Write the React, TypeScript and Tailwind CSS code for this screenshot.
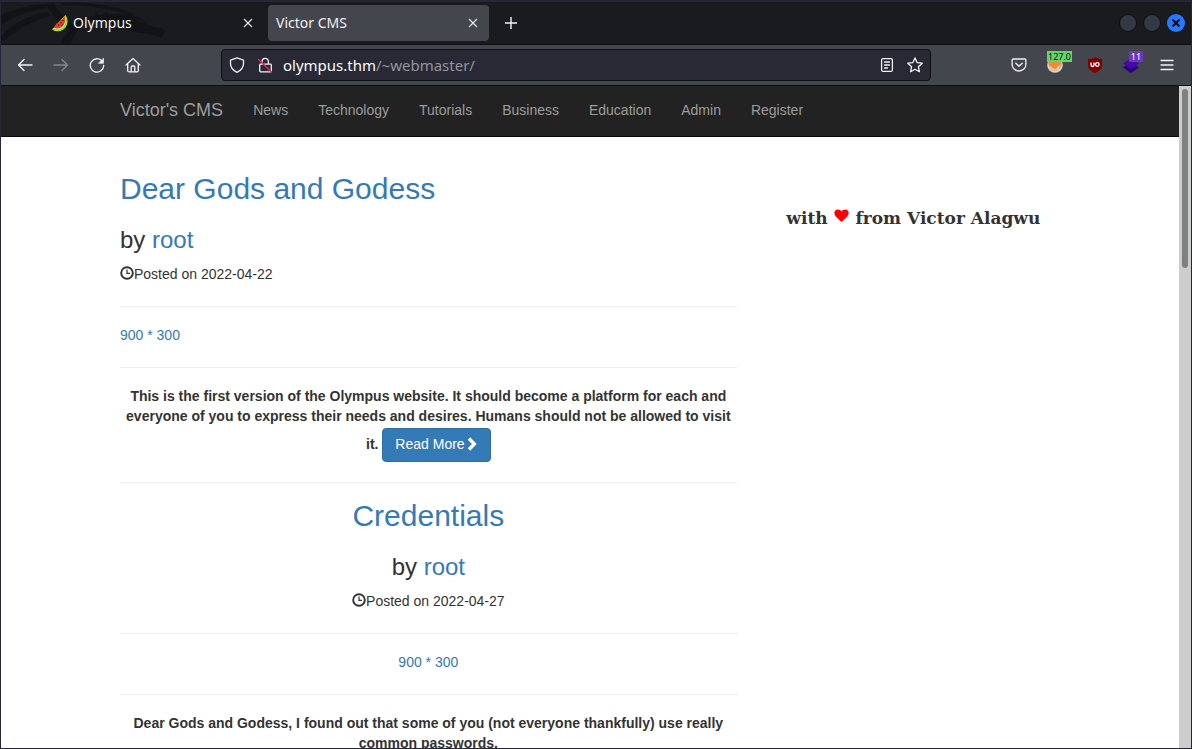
import type { ReactNode } from "react";

const NAV_LINKS = ["News", "Technology", "Tutorials", "Business", "Education", "Admin", "Register"];

function Dragon() {
  return (
    <svg className="pointer-events-none absolute top-0 left-0" width="170" height="42" viewBox="0 2 170 42" fill="#121316" aria-hidden="true">
      <path d="M0 15 C14 9 28 5 44 4 L46 8 C30 10 14 16 0 25Z" />
      <path d="M0 36 C12 23 28 15 47 12 L49 16 C32 20 18 29 4 40 L0 42Z" />
      <path d="M44 4 L52 3 L62 16 L76 28 L70 31 L56 20Z" />
      <path d="M60 3 C84 1 112 5 133 14 L131 16 C110 8 84 5 60 5Z" />
      <path d="M59 44 C65 34 70 26 80 20 C94 14 118 12 134 16 C141 18 144 21 147 25 L165 30 L160 38 L152 35 L134 32 L119 26 C105 22 92 21 83 25 C75 30 73 36 70 44Z" />
      <path d="M94 12 L99 16 L106 12 L109 16 L117 13 L120 18 L96 19Z" />
      <path d="M137 20l7 3" stroke="#1a1b1f" />
    </svg>
  );
}

function Watermelon() {
  return (
    <svg width="18" height="18" viewBox="0 0 18 18" aria-hidden="true">
      <path d="M14.500 1 C19 7 16 17 7 17.300 C4.500 17.400 2.500 16.800 1 15.500 L3 13.500 L12.500 3Z" fill="#9be00a" />
      <path d="M13.700 2.500 C16.500 8 13 14.500 7 15.200 C5 15.400 3.500 15.200 2.300 14.500Z" fill="#e9f0a0" />
      <path d="M13.300 2 C15.700 8 12.500 13.800 7 14.500 C5 14.700 4 14.500 3 13.800 L5.500 9.500 L8 9 L9 6 L11.500 5Z" fill="#e63a35" />
      <path d="M10 8v1.500M7.500 10.500v1.500M11.500 10.500l-1 1M12 6v1" stroke="#4a1616" strokeWidth="1" />
    </svg>
  );
}

function CloseX() {
  return (
    <svg width="10" height="10" viewBox="0 0 10 10" stroke="#e6e6e8" strokeWidth="1.2" aria-hidden="true">
      <path d="M1 1l8 8M9 1l-8 8" />
    </svg>
  );
}

function Stroke({ children, color = "#f2f2f4" }: { children: ReactNode; color?: string }) {
  return (
    <svg width="16" height="16" viewBox="0 0 16 16" fill="none" stroke={color} strokeWidth="1.3" strokeLinecap="round" strokeLinejoin="round" aria-hidden="true">
      {children}
    </svg>
  );
}

function Tool({ label, children }: { label: string; children: ReactNode }) {
  return (
    <button type="button" aria-label={label} className="relative flex h-8 w-9 shrink-0 items-center justify-center">
      {children}
    </button>
  );
}

function TabStrip() {
  return (
    <div className="relative flex h-[42px] shrink-0 items-center bg-[#1a1b1f]">
      <Dragon />
      <div className="relative flex w-[267px] items-center pr-3 pl-[50px]">
        <Watermelon />
        <span className="flex-1 pl-1 text-sm leading-5 text-[#f0f0f2]">Olympus</span>
        <button type="button" aria-label="Close Olympus" className="flex size-4 items-center justify-center"><CloseX /></button>
      </div>
      <div className="flex h-9 w-[221px] items-center rounded bg-[#43464d] px-2">
        <span className="flex-1 text-sm leading-5 text-[#f0f0f2]">Victor CMS</span>
        <button type="button" aria-label="Close Victor CMS" className="flex size-4 items-center justify-center"><CloseX /></button>
      </div>
      <button type="button" aria-label="New tab" className="ml-[14px] flex size-4 items-center justify-center">
        <svg width="12" height="12" viewBox="0 0 12 12" stroke="#f4f4f4" strokeWidth="1.4" aria-hidden="true"><path d="M6 0v12M0 6h12" /></svg>
      </button>
      <div className="ml-auto flex items-center gap-[6px] pr-[6px]">
        <button type="button" aria-label="Minimize" className="size-[18px] rounded-full border border-[#0c0d10] bg-[#343946]" />
        <button type="button" aria-label="Maximize" className="size-[18px] rounded-full border border-[#0c0d10] bg-[#343946]" />
        <button type="button" aria-label="Close window" className="flex size-[18px] items-center justify-center rounded-full bg-[#2777ff]">
          <svg width="8" height="8" viewBox="0 0 8 8" stroke="#0b0d14" strokeWidth="2" aria-hidden="true"><path d="M.5 .5l7 7M7.500 .5l-7 7" /></svg>
        </button>
      </div>
    </div>
  );
}

function Toolbar() {
  return (
    <div className="flex h-[42px] shrink-0 items-center border-y border-[#0e0f12] bg-[#43464d] px-[6px]">
      <Tool label="Back"><Stroke><path d="M15 8H1.500M7 2.500L1.500 8l5.500 5.500" /></Stroke></Tool>
      <Tool label="Forward"><Stroke color="#84868b"><path d="M1 8h13.500M9 2.500l5.500 5.500-5.500 5.500" /></Stroke></Tool>
      <Tool label="Reload">
        <Stroke><path d="M13.200 4.200A6.700 6.700 0 1 0 14.700 8.500" /><path d="M14.500 1.500v4.800H9.700z" fill="#f2f2f4" strokeWidth=".6" /></Stroke>
      </Tool>
      <Tool label="Home">
        <Stroke><path d="M1 8l7-6.500L15 8M2.700 6.800v6.700q0 1.300 1.300 1.300h8q1.300 0 1.300-1.300V6.800M6.200 14.500V10q0-1 1-1h1.600q1 0 1 1v4.500" /></Stroke>
      </Tool>
      <form className="ml-[70px] flex h-8 min-w-0 flex-1 items-center rounded border border-[#101116] bg-[#282935] px-[7px]" onSubmit={(e) => e.preventDefault()}>
        <button type="button" aria-label="Tracking protection" className="flex shrink-0">
          <Stroke><path d="M8 .8l6.500 2.300v3.500c0 4-2.500 7-6.500 8.700C4 13.600 1.500 10.600 1.500 6.600V3.100z" /></Stroke>
        </button>
        <button type="button" aria-label="Connection not secure" className="ml-3 flex shrink-0">
          <Stroke>
            <path d="M5 7V4.500a3.200 3.200 0 0 1 6.400 0V7M3.500 7.200h10q.8 0 .8.800v6q0 .8-.8.800h-10q-.8 0-.8-.8V8q0-.8.8-.8z" />
            <path d="M1.500 2.500l13 12.500" stroke="#e22850" strokeWidth="1.500" />
          </Stroke>
        </button>
        <a href="#top" className="ml-[10px] flex-1 truncate text-[15px] leading-5 text-[#94959d]">
          <span className="text-[#fbfbfe]">olympus.thm</span>/~webmaster/
        </a>
        <button type="button" aria-label="Reader view" className="flex shrink-0">
          <Stroke><rect x="2.600" y="1.600" width="10.800" height="12.800" rx="1.500" /><path d="M5.500 5h5M5.500 8h5M5.500 11h3" /></Stroke>
        </button>
        <button type="button" aria-label="Bookmark" className="ml-3 flex shrink-0">
          <Stroke><path d="M8 .9l2.100 4.700 5.100.6-3.800 3.500 1 5L8 12.200 3.600 14.700l1-5L.8 6.200l5.100-.6z" /></Stroke>
        </button>
      </form>
      <div className="ml-[70px] flex items-center">
        <Tool label="Pocket">
          <Stroke><path d="M2.300 2h11.400q1.200 0 1.200 1.200v4.300a6.900 6.500 0 0 1-13.800 0V3.200Q1.100 2 2.300 2zM4.800 6.200L8 9.200l3.200-3" /></Stroke>
        </Tool>
        <Tool label="Proxy">
          <svg width="16" height="16" viewBox="0 0 16 16" aria-hidden="true">
            <circle cx="8" cy="8" r="7.800" fill="#d9d6d2" />
            <path d="M1.500 3C1 10 4 14 8 14s7-4 6.500-11z" fill="#ee8d36" />
            <path d="M2.500 9.500l2.500 2L8 13l4-1.500M10 11l3-2.500" stroke="#fff" strokeWidth="1" fill="none" />
          </svg>
          <span className="absolute top-[2px] left-[10px] h-[11px] w-[25px] bg-[#65d46b] pl-px text-left text-[9px] leading-[11px] text-[#0b160c]">127.0</span>
        </Tool>
        <div className="w-1" />
        <Tool label="Ad blocker">
          <svg width="16" height="16" viewBox="0 0 16 16" aria-hidden="true">
            <path d="M8 0c2 1.500 4 2 7 2v6c0 4-3 6-7 8-4-2-7-4-7-8V2c3 0 5-.5 7-2z" fill="#800000" />
            <path d="M4 5.500v2.300q0 1.700 1.500 1.700T7 7.800V5.500" fill="none" stroke="#fff" strokeWidth="1.300" />
            <circle cx="10.300" cy="7.500" r="1.800" fill="none" stroke="#fff" strokeWidth="1.300" />
          </svg>
        </Tool>
        <Tool label="Technology profiler">
          <svg width="16" height="16" viewBox="0 0 16 16" aria-hidden="true">
            <path d="M8 5l8 5.500L8 16l-8-5.500z" fill="#26007a" />
            <path d="M8 1l8 5.500L8 12 0 6.500z" fill="#4608ad" />
          </svg>
          <span className="absolute top-[2px] left-4 h-[11px] w-[14px] rounded-[1px] bg-[#6b38bd] text-center text-[9px] leading-[11px] text-white">11</span>
        </Tool>
        <Tool label="Menu"><Stroke><path d="M2 3.500h12M2 8h12M2 12.500h12" /></Stroke></Tool>
      </div>
    </div>
  );
}

function Clock() {
  return (
    <svg className="inline-block align-[-1px]" width="14" height="14" viewBox="0 0 14 14" fill="none" stroke="#333" aria-hidden="true">
      <circle cx="7" cy="7" r="5.800" strokeWidth="1.900" />
      <path d="M7 3.500V7.400h3" strokeWidth="1.200" />
    </svg>
  );
}

function Rule() {
  return <hr className="mt-[22px] mb-[18px] border-[#eee]" />;
}

const LINK = "text-[#337ab7]";

function Post({ title, date, children }: { title: string; date: string; children: ReactNode }) {
  return (
    <article>
      <h2 className="mb-[26px] text-[30px] leading-[27px] font-medium"><a href="#post" className={LINK}>{title}</a></h2>
      <h3 className="mb-[12px] text-2xl leading-[24px] font-medium">by <a href="#root" className={LINK}>root</a></h3>
      <p><Clock />Posted on {date}</p>
      <Rule />
      <a href="#image" className={`block ${LINK}`}>900 * 300</a>
      <Rule />
      <p className="text-center font-bold">{children}</p>
    </article>
  );
}

function Site() {
  return (
    <div className="min-w-0 flex-1 overflow-hidden bg-white font-['Liberation_Sans',Arial,sans-serif] text-sm leading-5 text-[#333]">
      <nav className="border-b border-[#080808] bg-[#222]">
        <div className="mx-auto flex h-[50px] max-w-[970px] items-center px-[15px] pb-[2px] text-[#9d9d9d]">
          <a href="#home" className="mr-[15px] text-lg leading-5">Victor's CMS</a>
          {NAV_LINKS.map((l) => <a key={l} href={`#${l.toLowerCase()}`} className="px-[15px]">{l}</a>)}
        </div>
      </nav>
      <div className="mx-auto flex max-w-[970px] pt-[38px]">
        <main className="w-2/3 px-[15px]">
          <Post title="Dear Gods and Godess" date="2022-04-22">
            This is the first version of the Olympus website. It should become a platform for each and everyone of you to express their needs and desires. Humans should not be allowed to visit it.{" "}
            <a href="#more" className="mt-[2px] inline-block rounded border border-[#2e6da4] bg-[#337ab7] px-3 pt-[5px] pb-[7px] align-baseline font-normal text-white">
              Read More
              <svg className="inline-block align-[-2px]" width="13" height="14" viewBox="0 0 13 14" fill="none" stroke="#fff" strokeWidth="3.400" aria-hidden="true"><path d="M4 1.500L9.300 7 4 12.500" /></svg>
            </a>
          </Post>
          <hr className="mt-5 mb-[19px] border-[#eee]" />
          <div className="text-center">
            <Post title="Credentials" date="2022-04-27">
              Dear Gods and Godess, I found out that some of you (not everyone thankfully) use really common passwords.
            </Post>
          </div>
        </main>
        <aside className="w-1/3 px-[15px] pt-[33px] text-center font-['DejaVu_Serif',serif] text-[17px] leading-5 font-bold">
          with{" "}
          <svg className="inline-block align-baseline" width="16" height="16" viewBox="0 0 17 17" fill="red" aria-hidden="true">
            <path d="M8 15L2 9C-1 5.500 .5 1.500 4 1.500c2 0 3.300 1 4 2.300.7-1.300 2-2.300 4-2.300 3.500 0 5 4 2 7.500z" />
          </svg>{" "}
          from Victor Alagwu
        </aside>
      </div>
    </div>
  );
}

export default function App() {
  return (
    <div className="flex h-screen flex-col overflow-hidden border border-t-2 border-[#252736] bg-[#252736] font-['Noto_Sans',sans-serif]">
      <TabStrip />
      <Toolbar />
      <div className="flex min-h-0 flex-1">
        <Site />
        <div className="w-3 shrink-0 bg-[#cdcdcd] px-[3px] pt-[3px]">
          <div className="h-[179px] rounded-full bg-[#7d8180]" />
        </div>
      </div>
    </div>
  );
}
